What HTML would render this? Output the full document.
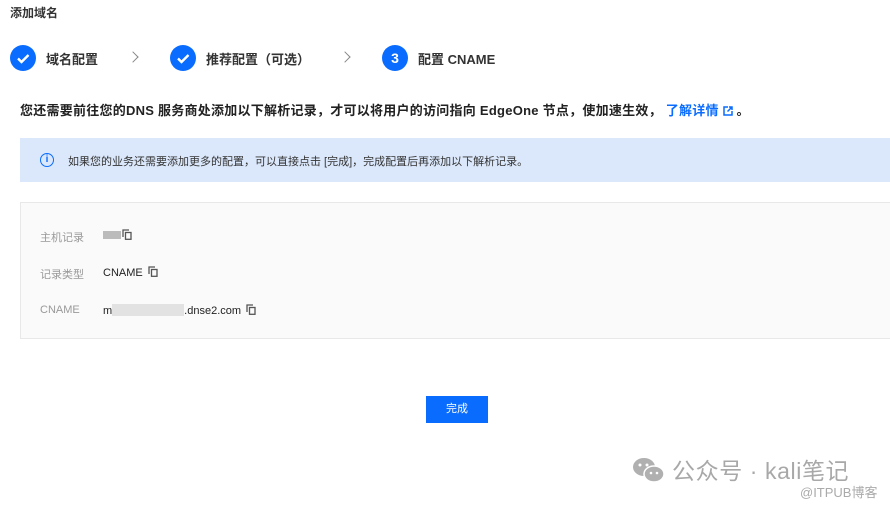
<!DOCTYPE html>
<html><head><meta charset="utf-8"><style>
*{margin:0;padding:0;box-sizing:border-box}
body{width:890px;height:506px;background:#fff;position:relative;overflow:hidden;font-family:"Liberation Sans","Noto Sans CJK SC",sans-serif;color:#222}
.a{position:absolute;white-space:nowrap}
.c{position:absolute;width:26px;height:26px;border-radius:50%;background:#0a6cff;color:#fff;font-weight:bold;font-size:14px;text-align:center;line-height:26px}
.st{font-size:13px;font-weight:bold;color:#333;top:49px}
.chev{position:absolute;top:53px;width:8px;height:8px;border-right:1.5px solid #888;border-top:1.5px solid #888;transform:rotate(45deg)}
.lab{font-size:11px;color:#999;left:40px}
.val{font-size:11px;color:#222;left:103px}
.cp{display:inline-block;width:10px;height:11px;margin-left:5px;vertical-align:-1px;position:relative}
</style></head><body>
<div class="a" style="left:10px;top:4px;font-size:12px;font-weight:bold;color:#333">添加域名</div>

<div class="c" style="left:10px;top:45px"><svg width="26" height="26"><path d="M8 13.5l3.5 3.5 7-7" stroke="#fff" stroke-width="2.4" fill="none"/></svg></div>
<div class="a st" style="left:46px">域名配置</div>
<div class="chev" style="left:129px"></div>
<div class="c" style="left:170px;top:45px"><svg width="26" height="26"><path d="M8 13.5l3.5 3.5 7-7" stroke="#fff" stroke-width="2.4" fill="none"/></svg></div>
<div class="a st" style="left:206px">推荐配置（可选）</div>
<div class="chev" style="left:341px"></div>
<div class="c" style="left:382px;top:45px">3</div>
<div class="a st" style="left:418px">配置 CNAME</div>

<div class="a" style="left:20px;top:100px;font-size:13px;font-weight:bold;color:#222;letter-spacing:0.25px">您还需要前往您的DNS 服务商处添加以下解析记录，才可以将用户的访问指向 EdgeOne 节点，使加速生效， <span style="color:#0a6cff">了解详情 <svg width="10" height="10" style="vertical-align:-1px"><path d="M5 1H1v8h8V5M6 1h3v3M9 1L4.5 5.5" stroke="#0a6cff" stroke-width="1.5" fill="none"/></svg></span> 。</div>

<div class="a" style="left:20px;top:138px;width:870px;height:44px;background:#dbe8fb"></div>
<div class="a" style="left:40px;top:153px;width:14px;height:14px;border:1.5px solid #0a6cff;border-radius:50%;color:#0a6cff;font-size:10px;font-weight:bold;text-align:center;line-height:11px">i</div>
<div class="a" style="left:68px;top:153px;font-size:11px;color:#333">如果您的业务还需要添加更多的配置，可以直接点击 [完成]，完成配置后再添加以下解析记录。</div>

<div class="a" style="left:20px;top:202px;width:872px;height:137px;background:#fafafa;border:1px solid #e8e8e8"></div>
<div class="a lab" style="top:229px">主机记录</div>
<div class="a val" style="top:229px"><span style="display:inline-block;width:18px;height:8px;background:#bbb;vertical-align:0"></span><svg class="cp" style="margin-left:1px" viewBox="0 0 10 11"><path d="M1 8V1h6" stroke="#555" stroke-width="1.3" fill="none"/><rect x="3.5" y="3.5" width="5.5" height="6.8" stroke="#555" stroke-width="1.3" fill="none"/></svg></div>
<div class="a lab" style="top:266px">记录类型</div>
<div class="a val" style="top:266px">CNAME<svg class="cp" viewBox="0 0 10 11"><path d="M1 8V1h6" stroke="#555" stroke-width="1.3" fill="none"/><rect x="3.5" y="3.5" width="5.5" height="6.8" stroke="#555" stroke-width="1.3" fill="none"/></svg></div>
<div class="a lab" style="top:304px">CNAME</div>
<div class="a val" style="top:304px">m<span style="display:inline-block;width:72px;height:12px;background:#e2e2e2;vertical-align:-2px"></span>.dnse2.com<svg class="cp" viewBox="0 0 10 11"><path d="M1 8V1h6" stroke="#555" stroke-width="1.3" fill="none"/><rect x="3.5" y="3.5" width="5.5" height="6.8" stroke="#555" stroke-width="1.3" fill="none"/></svg></div>

<div class="a" style="left:426px;top:396px;width:62px;height:27px;background:#0a6cff;color:#fff;font-size:11px;text-align:center;line-height:27px">完成</div>

<svg class="a" style="left:632px;top:456px" width="34" height="28"><ellipse cx="12" cy="11" rx="11" ry="9" fill="#b0b0b0"/><ellipse cx="22" cy="18" rx="10" ry="8" fill="#b0b0b0" stroke="#fff" stroke-width="1.5"/><circle cx="8" cy="9" r="1.5" fill="#fff"/><circle cx="15" cy="9" r="1.5" fill="#fff"/><circle cx="19" cy="17" r="1.3" fill="#fff"/><circle cx="25" cy="17" r="1.3" fill="#fff"/></svg>
<div class="a" style="left:672px;top:452px;font-size:23px;color:#a8a8a8;letter-spacing:0.6px">公众号 · kali笔记</div>
<div class="a" style="left:800px;top:482px;font-size:13px;color:#aaa">@ITPUB博客</div>
</body></html>
